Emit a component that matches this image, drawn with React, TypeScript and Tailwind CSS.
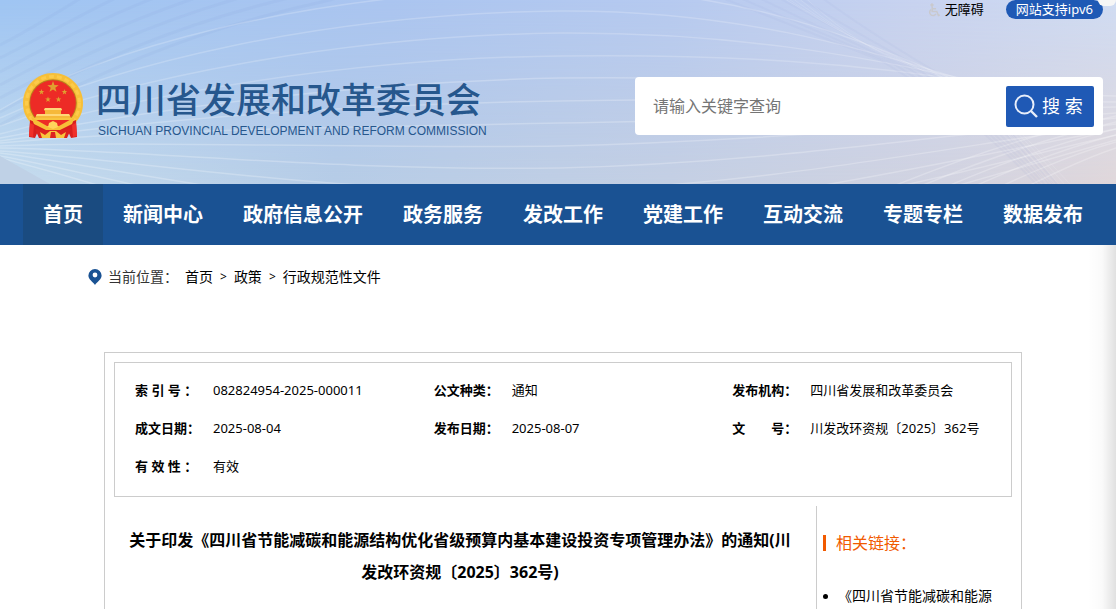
import type { FormEvent, ReactNode } from 'react';

const NAV_ITEMS = [
  '首页',
  '新闻中心',
  '政府信息公开',
  '政务服务',
  '发改工作',
  '党建工作',
  '互动交流',
  '专题专栏',
  '数据发布',
];

const META = [
  { label: '索 引 号 ：', value: '082824954-2025-000011' },
  { label: '公文种类：', value: '通知' },
  { label: '发布机构：', value: '四川省发展和改革委员会' },
  { label: '成文日期：', value: '2025-08-04' },
  { label: '发布日期：', value: '2025-08-07' },
  { label: '文　　号：', value: '川发改环资规〔2025〕362号' },
  { label: '有 效 性 ：', value: '有效' },
];

// Each family is morphed from the first curve to the last one.
// A curve is M + two cubic segments: 7 points, 14 numbers.
const WAVES = [
  {
    count: 4,
    from: [0, 110, 100, 50, 300, -8, 560, -12, 740, -12, 860, 40, 950, 78],
    to: [0, 134, 150, 94, 350, 58, 560, 56, 720, 54, 860, 62, 1000, 86],
    color: '#ffffff',
    opacity: 0.2,
    width: 1.5,
  },
  {
    count: 9,
    from: [0, 138, 150, 110, 350, 82, 560, 78, 760, 76, 900, 86, 1116, 96],
    to: [0, 158, 130, 190, 300, 260, 560, 258, 760, 250, 940, 190, 1116, 140],
    color: '#ffffff',
    opacity: 0.24,
    width: 1.5,
  },
  {
    count: 6,
    from: [860, 200, 930, 170, 1020, 136, 1116, 116, 1120, 116, 1124, 116, 1128, 116],
    to: [1000, 200, 1040, 180, 1080, 160, 1116, 148, 1120, 146, 1124, 144, 1128, 142],
    color: '#ffffff',
    opacity: 0.24,
    width: 1.5,
  },
  {
    count: 5,
    from: [700, -60, 780, 0, 860, 50, 960, 80, 990, 110, 1020, 150, 1060, 200],
    to: [770, -40, 830, 30, 880, 60, 960, 82, 1000, 110, 1040, 150, 1084, 200],
    color: '#ffffff',
    opacity: 0.12,
    width: 1,
  },
  {
    count: 6,
    from: [600, -50, 700, -10, 780, 20, 880, 60, 930, 90, 990, 130, 1050, 200],
    to: [760, -50, 820, 0, 880, 40, 950, 80, 990, 110, 1030, 150, 1070, 200],
    color: '#8f9ccf',
    opacity: 0.07,
    width: 2,
  },
  {
    count: 7,
    from: [0, 45, 30, 30, 70, 5, 110, -20, 120, -20, 130, -20, 140, -20],
    to: [0, 125, 90, 76, 190, 30, 330, 0, 360, -10, 400, -20, 440, -30],
    color: '#7fa0dc',
    opacity: 0.1,
    width: 3,
  },
];

function wavePath(from: number[], to: number[], t: number) {
  const p = from.map((n, i) => Math.round(n + (to[i] - n) * t));
  return `M${p[0]} ${p[1]}C${p.slice(2, 8).join(' ')}C${p.slice(8, 14).join(' ')}`;
}

function HeaderBackdrop() {
  return (
    <svg
      viewBox="0 0 1116 184"
      preserveAspectRatio="none"
      className="absolute inset-0 w-full h-full"
      aria-hidden="true"
    >
      <defs>
        <linearGradient id="sky" x1="0" x2="1" y1="0" y2="0">
          <stop offset="0" stopColor="#9fc5f3" />
          <stop offset="0.35" stopColor="#abc5f0" />
          <stop offset="0.6" stopColor="#b6caf0" />
          <stop offset="0.82" stopColor="#c8d3f0" />
          <stop offset="1" stopColor="#d0dcf3" />
        </linearGradient>
        <linearGradient id="ground" x1="0" x2="1" y1="0" y2="0">
          <stop offset="0" stopColor="#c6dced" />
          <stop offset="0.3" stopColor="#b6cce6" />
          <stop offset="0.6" stopColor="#c4cfe3" />
          <stop offset="0.85" stopColor="#d2d3e0" />
          <stop offset="1" stopColor="#e0d7da" />
        </linearGradient>
        <linearGradient id="fade" x1="0" x2="0" y1="0" y2="1">
          <stop offset="0" stopColor="#fff" stopOpacity="0" />
          <stop offset="1" stopColor="#fff" />
        </linearGradient>
        <mask id="lower">
          <rect width="1116" height="184" fill="url(#fade)" />
        </mask>
      </defs>
      <rect width="1116" height="184" fill="url(#sky)" />
      <rect width="1116" height="184" fill="url(#ground)" mask="url(#lower)" />
      {WAVES.map((wave, w) =>
        Array.from({ length: wave.count }, (_, i) => (
          <path
            key={`${w}-${i}`}
            d={wavePath(wave.from, wave.to, i / (wave.count - 1))}
            fill="none"
            stroke={wave.color}
            strokeOpacity={wave.opacity}
            strokeWidth={wave.width}
          />
        ))
      )}
      <path d="M0 156L50 184H0z" fill="#bfd1e6" />
    </svg>
  );
}

function Star({ x, y, r }: { x: number; y: number; r: number }) {
  const points = Array.from({ length: 10 }, (_, i) => {
    const radius = i % 2 ? r * 0.4 : r;
    const a = (Math.PI / 5) * i - Math.PI / 2;
    return `${(x + radius * Math.cos(a)).toFixed(2)},${(y + radius * Math.sin(a)).toFixed(2)}`;
  });
  return <polygon points={points.join(' ')} fill="#e0a030" />;
}

function Emblem() {
  return (
    <svg viewBox="0 0 60 66" className="w-[60px] h-[66px] shrink-0" role="img" aria-label="国徽">
      <path d="M30 0C14 0 0 13 0 30c0 9 3 15 8 20h44c5-5 8-11 8-20C60 13 46 0 30 0z" fill="#f7bf38" />
      <circle cx="30" cy="30" r="26.5" fill="none" stroke="#fccb4a" strokeWidth="3" strokeDasharray="5 3" />
      <circle cx="30" cy="30" r="23.8" fill="#b9801d" />
      <circle cx="30" cy="30" r="22.8" fill="#ed2b26" />
      <Star x={30} y={14} r={6} />
      <Star x={18.5} y={19} r={3} />
      <Star x={41.5} y={19} r={3} />
      <Star x={25} y={26.5} r={3} />
      <Star x={35.5} y={26.5} r={3} />
      <path d="M22 35h16l1 2-1 1v3h8l2 4H12l2-4h8v-3l-1-1z" fill="#f6b93a" />
      <path d="M22 35h16l1 2H21zM14 41h32l1 2H13z" fill="#ffd878" />
      <path d="M11 45h38v2H11z" fill="#f8c63f" />
      <path d="M12 47h36l-5 8H17z" fill="#ed2b26" />
      <path d="M7 47l10 4 9 4-3 4-8-1-3 7-6-1z" fill="#d81f1e" />
      <path d="M53 47l-10 4-9 4 3 4 8-1 3 7 6-1z" fill="#d81f1e" />
      <path d="M8 44l16 9h12l16-9-3 7-14 7H25l-14-7z" fill="#f7bf38" />
      <path d="M7 50l4 2-1 12-4-1zM53 50l-4 2 1 12 4-1z" fill="#f0302a" />
      <path d="M12 56l10 1h16l10-1-4 9H16z" fill="#dd2320" />
      <path d="M17 59l5 3 5-4h6l5 4 5-3-2 6H19z" fill="#f8c63f" />
      <path d="M28 59h4l1 6h-6z" fill="#dd2320" />
      <path d="M26 50l4-2 4 2 1 4-5 2-5-2z" fill="#ffd55c" />
    </svg>
  );
}

function AccessibleIcon() {
  return (
    <svg viewBox="0 0 14 14" className="w-[14px] h-[14px]" fill="none" stroke="#c9c9cd" aria-hidden="true">
      <circle cx="5" cy="2" r="1.2" fill="#c9c9cd" />
      <path d="M5.2 3.5v5h4.6l1.6 4 1.4-.5M5.5 5.8h3.6M4 6.5a3.4 3.4 0 1 0 5 4.4" strokeWidth="1.5" />
    </svg>
  );
}

function Header() {
  function handleSearch(e: FormEvent) {
    e.preventDefault();
  }

  return (
    <header className="relative h-[184px] overflow-hidden bg-[#b9cbee]">
      <HeaderBackdrop />
      <div className="relative flex h-[19px] items-center justify-end gap-[22px] pr-[13px] text-[13px] leading-[19px]">
        <a href="#accessible" className="flex items-center gap-1 text-black">
          <AccessibleIcon />
          无障碍
        </a>
        <span className="rounded-full bg-[#1f59b5] px-[10px] text-white">网站支持ipv6</span>
      </div>
      <div className="relative flex items-start justify-between pl-[23px] pr-[13px] pt-[54px]">
        <a href="#home" className="flex gap-[13px] text-[#26578d]">
          <Emblem />
          <span className="flex flex-col pt-1">
            <span className="text-[35px] leading-[46px] font-medium whitespace-nowrap">四川省发展和改革委员会</span>
            <span className="pl-[2px] font-['Liberation_Sans',sans-serif] text-[12px] leading-4 whitespace-nowrap">
              SICHUAN PROVINCIAL DEVELOPMENT AND REFORM COMMISSION
            </span>
          </span>
        </a>
        <form
          onSubmit={handleSearch}
          className="mt-1 flex h-[58px] w-[468px] items-center rounded bg-white pl-[18px] pr-[9px]"
        >
          <input
            type="text"
            aria-label="请输入关键字查询"
            placeholder="请输入关键字查询"
            className="min-w-0 flex-1 text-base outline-none placeholder:text-[#757575]"
          />
          <button
            type="submit"
            className="flex h-[41px] w-[88px] items-center gap-1 rounded-[2px] bg-[#1f59b5] pl-2 text-lg text-white"
          >
            <svg viewBox="0 0 24 24" className="h-6 w-6" fill="none" stroke="#e8eefa" strokeWidth="2" aria-hidden="true">
              <circle cx="10.5" cy="10.5" r="9" />
              <path d="M17 17l6 6" strokeWidth="2.4" />
            </svg>
            搜 索
          </button>
        </form>
      </div>
    </header>
  );
}

function NavBar() {
  return (
    <nav className="flex h-[61px] bg-[#1a5293] pl-[23px]">
      {NAV_ITEMS.map((item, i) => (
        <a
          key={item}
          href="#nav"
          className={`px-5 text-xl leading-[61px] font-bold whitespace-nowrap text-white ${i === 0 ? 'bg-[#1a4b80]' : ''}`}
        >
          {item}
        </a>
      ))}
    </nav>
  );
}

function Breadcrumb() {
  return (
    <div className="flex items-center pl-[88px] pt-5 text-sm leading-6 text-black">
      <svg viewBox="0 0 14 16" className="mr-[6px] h-4 w-[14px]" aria-hidden="true">
        <path d="M7 0a6.6 6.6 0 0 0-6.6 6.6C.4 10.5 5 13 7 16c2-3 6.6-5.5 6.6-9.4A6.6 6.6 0 0 0 7 0z" fill="#1a5293" />
        <circle cx="7" cy="6" r="2.4" fill="#fff" />
      </svg>
      <span className="mr-[7px] text-[#333]">当前位置：</span>
      <a href="#home">首页</a>
      <span className="mx-[7px] text-xs">&gt;</span>
      <a href="#policy">政策</a>
      <span className="mx-[7px] text-xs">&gt;</span>
      <a href="#files">行政规范性文件</a>
    </div>
  );
}

function MetaItem({ label, children }: { label: string; children: ReactNode }) {
  return (
    <div className="flex pl-5 leading-[38px]">
      <dt className="w-[78px] shrink-0 font-bold whitespace-pre">{label}</dt>
      <dd className="whitespace-nowrap">{children}</dd>
    </div>
  );
}

export default function App() {
  return (
    <div className="relative flex min-h-screen flex-col overflow-hidden bg-white font-['Noto_Sans','Noto_Sans_CJK_SC',sans-serif] text-black">
      <Header />
      <NavBar />
      <div className="relative flex flex-1 flex-col">
        <Breadcrumb />
        <main className="mt-[63px] ml-[104px] mr-[94px] flex flex-1 flex-col border-x border-t border-[#ccc] px-[9px] pt-[9px]">
          <dl className="grid grid-cols-3 border border-[#ccc] pt-2 pb-[11px] text-[13px]">
            {META.map(item => (
              <MetaItem key={item.label} label={item.label}>
                {item.value}
              </MetaItem>
            ))}
          </dl>
          <div className="mt-[9px] flex flex-1">
            <h1 className="flex-1 pl-[10px] pr-5 pt-[18px] text-center text-base leading-8 font-bold">
              关于印发《四川省节能减碳和能源结构优化省级预算内基本建设投资专项管理办法》的通知(川发改环资规〔2025〕362号)
            </h1>
            <aside className="w-[196px] border-l border-[#ccc] pl-[6px] pt-[29px]">
              <h2 className="border-l-[3px] border-[#f15a00] pl-[10px] text-base leading-4 text-[#f15a00]">
                相关链接：
              </h2>
              <ul className="mt-[33px] text-sm leading-6">
                <li className="flex items-center gap-[10px] whitespace-nowrap">
                  <span className="h-[5px] w-[5px] rounded-full bg-black" />
                  <a href="#related">《四川省节能减碳和能源</a>
                </li>
              </ul>
            </aside>
          </div>
        </main>
        <div className="pointer-events-none absolute inset-y-0 right-0 w-7 bg-linear-to-r from-black/0 via-black/2 to-black/12" />
      </div>
      <div className="absolute top-0 right-0 h-[6px] w-[18px] rounded-b-full bg-[#f6f6f6]" />
    </div>
  );
}
